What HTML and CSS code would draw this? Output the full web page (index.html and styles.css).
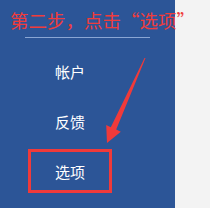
FILE: index.html
```html
<!DOCTYPE html>
<html lang="zh-CN">
<head>
    <meta charset="UTF-8">
    <meta name="viewport" content="width=device-width, initial-scale=1.0">
    <title>选项</title>
    <link rel="stylesheet" href="styles.css">
</head>
<body>
    <div class="page">
        <aside class="sidebar">
            <div class="step-title">第二步，点击“选项”</div>
            <div class="divider"></div>

            <ul class="menu">
                <li class="menu-item">帐户</li>
                <li class="menu-item">反馈</li>
                <li class="menu-item highlight">选项</li>
            </ul>

            <svg class="arrow" width="175" height="208" viewBox="0 0 175 208">
                <polygon points="145.5,58 116.2,129.6 120.8,131.7 107,143 106.2,125.1 110.8,127.2 144.5,58" fill="#f03a3a"/>
            </svg>
        </aside>
        <div class="content"></div>
    </div>
</body>
</html>
```

FILE: styles.css
```css
* {
    margin: 0;
    padding: 0;
    box-sizing: border-box;
}

body {
    font-family: "Noto Sans CJK SC", "Noto Sans", sans-serif;
    background-color: #f3f3f3;
}

.page {
    display: flex;
    height: 208px;
}

.sidebar {
    position: relative;
    width: 175px;
    background-color: #2c5597;
}

.content {
    flex: 1;
    background-color: #f3f3f3;
}

.step-title {
    padding: 8px 0 0 10px;
    font-size: 18.5px;
    line-height: 24px;
    color: #f03c3c;
    white-space: nowrap;
    position: relative;
    z-index: 1;
}

.divider {
    width: 125px;
    height: 1px;
    margin: 5px 0 0 25px;
    background-color: #8aa6d4;
}

.menu {
    list-style: none;
    display: flex;
    flex-direction: column;
    gap: 6px;
    margin-top: 11px;
}

.menu-item {
    width: 84px;
    height: 44px;
    margin-left: 28px;
    display: flex;
    align-items: center;
    justify-content: center;
    font-size: 15px;
    color: #ffffff;
}

.highlight {
    border: 3px solid #f03a3a;
}

.arrow {
    position: absolute;
    top: 0;
    left: 0;
}
```
